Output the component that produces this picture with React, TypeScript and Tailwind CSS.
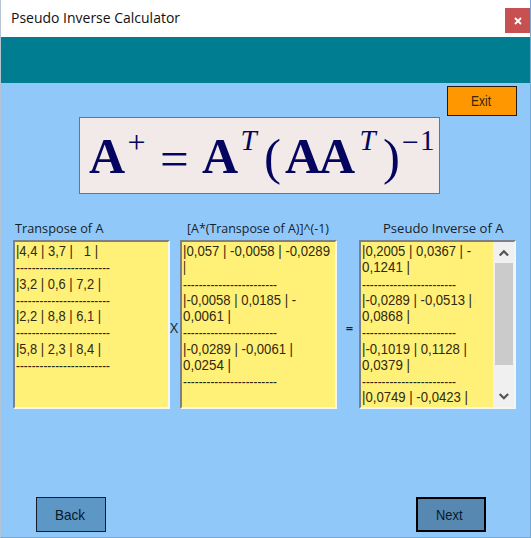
import type { ReactNode } from "react";

const DASHES = "------------------------";

type Line = { text: string; width: number };

const dash: Line = { text: DASHES, width: 94 };

const transpose: Line[] = [
  { text: "|4,4 | 3,7 |   1 |", width: 82 },
  dash,
  { text: "|3,2 | 0,6 | 7,2 |", width: 85 },
  dash,
  { text: "|2,2 | 8,8 | 6,1 |", width: 85 },
  dash,
  { text: "|5,8 | 2,3 | 8,4 |", width: 85 },
  dash,
];

const inverse: Line[] = [
  { text: "|0,057 | -0,0058 | -0,0289", width: 147 },
  { text: "|", width: 3 },
  dash,
  { text: "|-0,0058 | 0,0185 | -", width: 113 },
  { text: "0,0061 |", width: 48 },
  dash,
  { text: "|-0,0289 | -0,0061 |", width: 110 },
  { text: "0,0254 |", width: 48 },
  dash,
];

const pseudo: Line[] = [
  { text: "|0,2005 | 0,0367 | -", width: 109 },
  { text: "0,1241 |", width: 48 },
  dash,
  { text: "|-0,0289 | -0,0513 |", width: 110 },
  { text: "0,0868 |", width: 48 },
  dash,
  { text: "|-0,1019 | 0,1128 |", width: 105 },
  { text: "0,0379 |", width: 48 },
  dash,
  { text: "|0,0749 | -0,0423 |", width: 106 },
];

function MatrixLine({ line }: { line: Line }) {
  const isDash = line.text === DASHES;
  return (
    <svg className="block h-[16.25px] w-full overflow-visible" aria-label={line.text}>
      <text
        x={0}
        y={isDash ? 13.7 : 12.8}
        textLength={line.width}
        lengthAdjust="spacingAndGlyphs"
        className="fill-[#30290f] font-['Liberation_Sans',sans-serif] text-[15.5px] whitespace-pre"
      >
        {line.text}
      </text>
    </svg>
  );
}

function Box({ lines, children }: { lines: Line[]; children?: ReactNode }) {
  return (
    <div className="flex h-[169px] w-[157px] border-2 border-t-[#7d8187] border-r-[#f4f6f4] border-b-[#f4f6f4] border-l-[#7d8187] bg-[#fff078]">
      <div className="min-w-0 flex-1 pt-[1px] pl-[0.5px]">
        {lines.map((l, i) => (
          <MatrixLine key={i} line={l} />
        ))}
      </div>
      {children}
    </div>
  );
}

function Scrollbar() {
  return (
    <div className="flex w-[21px] shrink-0 flex-col items-center bg-[#f0f0f0]">
      <svg className="h-[21px] w-[18px]" viewBox="0 0 18 21" fill="none" stroke="#555" strokeWidth="2.3">
        <path d="M4.7 13.5L8.9 9.3L13.1 13.5" />
      </svg>
      <div className="h-[102px] w-[18px] bg-[#cbcbcb]" />
      <svg className="mt-[20px] h-[22px] w-[18px]" viewBox="0 0 18 22" fill="none" stroke="#555" strokeWidth="2.3">
        <path d="M4.7 9L8.9 13.2L13.1 9" />
      </svg>
    </div>
  );
}

function Formula() {
  const bold = "pt-[13px] text-[50px] font-bold";
  const sup = "pt-[8px] text-[29px]";
  return (
    <div className="ml-[78px] flex h-[77px] w-[361px] shrink-0 items-start border border-[#b0566a] bg-[#f1eae9] pl-[9px] font-['Liberation_Serif',serif] leading-none text-[#05055f]">
      <span className={`w-[38.5px] ${bold}`}>A</span>
      <span className="w-[32.5px] pt-[8px] text-[32px]">+</span>
      <span className="w-[42px] pt-[15.5px] text-[51px]">=</span>
      <span className={`w-[38.5px] ${bold}`}>A</span>
      <span className={`w-[23.5px] italic ${sup}`}>T</span>
      <span className="w-[21px] pt-[14px] text-[51px]">(</span>
      <span className={`w-[34px] ${bold}`}>A</span>
      <span className={`w-[40.5px] ${bold}`}>A</span>
      <span className={`w-[23.5px] italic ${sup}`}>T</span>
      <span className="w-[19px] pt-[14px] text-[51px]">)</span>
      <span className="w-[18px] pt-[9px] text-[30px]">−</span>
      <span className={sup}>1</span>
    </div>
  );
}

function Label({ text, width, className }: { text: string; width: number; className: string }) {
  return (
    <div className={`mb-px h-[20px] ${className}`}>
      <svg className="block h-[20px] w-full overflow-visible">
        <text
          x={0}
          y={14}
          textLength={width}
          lengthAdjust="spacingAndGlyphs"
          className="fill-[#17212b] font-['Open_Sans',sans-serif] text-[13px]"
        >
          {text}
        </text>
      </svg>
    </div>
  );
}

function ButtonText({ text, width }: { text: string; width: number }) {
  return (
    <svg className="block h-[18px] overflow-visible" width={width}>
      <text
        x={0}
        y={14}
        textLength={width}
        lengthAdjust="spacingAndGlyphs"
        className="fill-current font-['Liberation_Sans',sans-serif] text-[14.5px]"
      >
        {text}
      </text>
    </svg>
  );
}

export default function App() {
  return (
    <div className="flex h-[538px] w-[531px] flex-col overflow-hidden border-r border-b border-l border-r-[#75a9d4] border-b-[#75a9d4] border-l-[#b4c4d2] bg-[#90c9f9]">
      <header className="flex h-[37px] shrink-0 items-start justify-between bg-white pl-[10px]">
        <h1 className="pt-[8px]">
          <svg className="block h-[20px] w-[170px] overflow-visible">
            <text
              x={0}
              y={15}
              textLength={169}
              lengthAdjust="spacingAndGlyphs"
              className="fill-[#111] font-['Open_Sans',sans-serif] text-[14.5px]"
            >
              Pseudo Inverse Calculator
            </text>
          </svg>
        </h1>
        <button className="mt-[8px] flex h-[25px] w-[25px] items-center justify-center bg-[#c75050]">
          <svg className="size-[8px]" viewBox="0 0 8 8" stroke="white" strokeWidth="1.8">
            <path d="M1 1L7 7M7 1L1 7" />
          </svg>
        </button>
      </header>
      <div className="h-[46px] shrink-0 bg-[#007d90]" />
      <div className="flex h-[34px] shrink-0 justify-end pt-[3px] pr-[13px]">
        <button className="flex h-[30px] w-[70px] shrink-0 items-center justify-center border border-[#241a0b] bg-[#ff9800] pr-[2px] text-[#3a2505]">
          <ButtonText text="Exit" width={20} />
        </button>
      </div>
      <Formula />
      <div className="mt-[25px] flex h-[190px] shrink-0 pl-[12px]">
        <div className="w-[157px] shrink-0">
          <Label className="pl-[2px]" text="Transpose of A" width={88.5} />
          <Box lines={transpose} />
        </div>
        <div className="w-[10px] shrink-0 pt-[100px] font-['Open_Sans',sans-serif] text-[14px] leading-[18px] text-[#17212b]">
          X
        </div>
        <div className="w-[157px] shrink-0">
          <Label className="pl-[7px]" text="[A*(Transpose of A)]^(-1)" width={142} />
          <Box lines={inverse} />
        </div>
        <div className="w-[22px] shrink-0 pt-[100px] pl-[3px] text-center font-['Open_Sans',sans-serif] text-[13px] leading-[18px] font-semibold text-[#17212b]">
          =
        </div>
        <div className="w-[157px] shrink-0">
          <Label className="pl-[24px]" text="Pseudo Inverse of A" width={120.5} />
          <Box lines={pseudo}>
            <Scrollbar />
          </Box>
        </div>
      </div>
      <div className="mt-[88px] flex shrink-0 justify-between pr-[44px] pl-[35px]">
        <button className="flex h-[35px] w-[70px] items-center justify-center border border-[#111d2b] bg-[#5c97c5] pr-[3px] text-[#0b1826]">
          <ButtonText text="Back" width={30} />
        </button>
        <button className="flex h-[35px] w-[70px] items-center justify-center border-2 border-black bg-[#5688b2] pr-[3px] text-[#0b1826]">
          <ButtonText text="Next" width={26.5} />
        </button>
      </div>
    </div>
  );
}
